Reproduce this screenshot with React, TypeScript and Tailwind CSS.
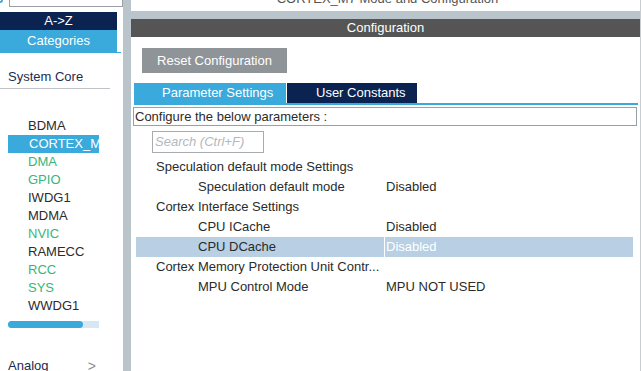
import React from 'react';

const font = { fontFamily: '"Liberation Sans", Arial, sans-serif' };

const peripherals: { name: string; green?: boolean; active?: boolean }[] = [
  { name: 'BDMA' },
  { name: 'CORTEX_M', active: true },
  { name: 'DMA', green: true },
  { name: 'GPIO', green: true },
  { name: 'IWDG1' },
  { name: 'MDMA' },
  { name: 'NVIC', green: true },
  { name: 'RAMECC' },
  { name: 'RCC', green: true },
  { name: 'SYS', green: true },
  { name: 'WWDG1' },
];

const params: { label: string; value?: string; child?: boolean; selected?: boolean }[] = [
  { label: 'Speculation default mode Settings' },
  { label: 'Speculation default mode', value: 'Disabled', child: true },
  { label: 'Cortex Interface Settings' },
  { label: 'CPU ICache', value: 'Disabled', child: true },
  { label: 'CPU DCache', value: 'Disabled', child: true, selected: true },
  { label: 'Cortex Memory Protection Unit Contr...' },
  { label: 'MPU Control Mode', value: 'MPU NOT USED', child: true },
];

const Sidebar = () => (
  <div className="w-[123px] shrink-0 flex flex-col bg-white relative text-[13px] [&>*]:shrink-0">
    <div className="h-[12px] relative">
      <div className="absolute left-[9px] right-0 top-[-4px] h-[11px] border border-[#9aa0a6] bg-white" />
      <div className="absolute left-0 top-0 w-[3px] h-[3px] border-r-2 border-b-2 border-[#3aa9dc] rounded-br-sm" />
    </div>
    <div className="w-[117px] h-[18px] bg-[#0b2350] text-white leading-[18px] text-center">A-&gt;Z</div>
    <div className="w-[117px] h-[22px] bg-[#3aa9dc] text-white leading-[22px] text-center">Categories</div>
    <div className="w-[121px] h-[1px] bg-[#3aa9dc]" />
    <div className="w-[110px] h-[36px] border-b border-[#c0c4c8] pl-[8px] pt-[17px] leading-[14px] text-[#1c2b4e]">System Core</div>
    <div className="flex flex-col pt-[28px]">
      {peripherals.map((p) => (
        <div
          key={p.name}
          className={`h-[18px] leading-[18px] whitespace-nowrap ${p.active ? 'ml-[8px] w-[91px] pl-[21px] bg-[#3aa9dc] text-white' : 'pl-[28px]'} ${p.green ? 'text-[#38b57b]' : p.active ? '' : 'text-[#2b2b2b]'}`}
        >
          {p.name}
        </div>
      ))}
    </div>
    <div className="ml-[8px] mt-[6px] w-[91px] h-[7px] bg-[#d6e8f6] rounded-l-full">
      <div className="w-[75px] h-[7px] bg-[#3aa9dc] rounded-full" />
    </div>
    <div className="flex items-center justify-between w-[96px] pl-[8px] mt-[31px] leading-[14px] text-[#1c2b4e]">
      <span>Analog</span>
      <span className="text-[#8a8f94] text-[14px]">&gt;</span>
    </div>
  </div>
);

const Main = () => (
  <div className="flex-1 flex flex-col bg-white text-[13px] text-[#2b2b2b] [&>*]:shrink-0">
    <div className="h-[11px] overflow-hidden flex justify-center">
      <div className="-mt-[8px] leading-[14px] text-[#555] pl-[4px]">CORTEX_M7 Mode and Configuration</div>
    </div>
    <div className="h-[8px] bg-[#b9c4cb]" />
    <div className="h-[18px] bg-[#545554] text-white leading-[18px] text-center">Configuration</div>
    <div className="ml-[11px] mt-[11px] w-[145px] h-[25px] bg-[#8f9499] text-white leading-[25px] text-center">
      Reset Configuration
    </div>
    <div className="ml-[3px] mt-[10px] flex gap-[1px]">
      <div className="w-[152px] h-[20px] bg-[#3aa9dc] text-white leading-[20px] pl-[28px]">Parameter Settings</div>
      <div className="w-[130px] h-[20px] bg-[#0b2350] text-white leading-[20px] pl-[29px]">User Constants</div>
    </div>
    <div className="ml-[3px] mr-[2px] h-[2px] bg-[#3aa9dc]" />
    <div className="ml-[2px] mr-[3px] mt-[2px] h-[19px] border border-[#9a9fa3] pl-[1px] leading-[17px]">
      Configure the below parameters :
    </div>
    <div className="ml-[21px] mt-[5px] w-[112px] h-[22px] border border-[#a8acb0] pl-[2px] leading-[20px] italic text-[#b4b8bc]">
      Search (Ctrl+F)
    </div>
    <div className="mt-[4px] flex flex-col">
      {params.map((r) => (
        <div
          key={r.label}
          className={`ml-[5px] mr-[7px] h-[20px] flex leading-[20px] ${r.selected ? 'bg-[#b8cfe4]' : ''}`}
        >
          <div className={`w-[248px] ${r.child ? 'pl-[62px]' : 'pl-[20px]'} whitespace-nowrap`}>{r.label}</div>
          {r.value && (
            <div className={`flex-1 ${r.selected ? 'border-l border-white text-white pl-[1px]' : 'pl-[2px]'}`}>{r.value}</div>
          )}
        </div>
      ))}
    </div>
  </div>
);

export default function App() {
  return (
    <div className="w-[641px] h-[371px] overflow-hidden flex bg-white" style={font}>
      <Sidebar />
      <div className="w-[8px] shrink-0 bg-[#b9c4cb]" />
      <Main />
      <div className="w-[1px] shrink-0 bg-[#c8cdd1]" />
    </div>
  );
}
